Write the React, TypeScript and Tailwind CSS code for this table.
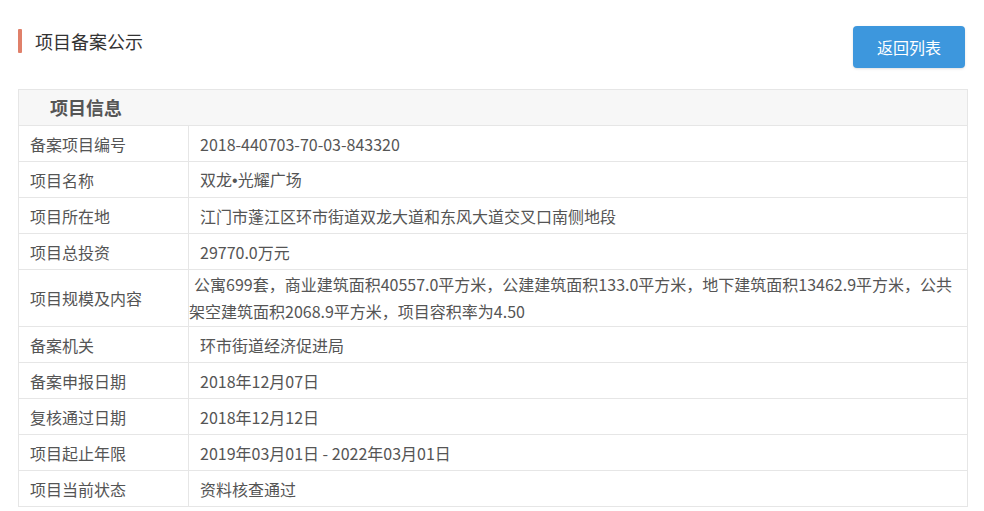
import React from 'react';

const rows: { label: string; value: React.ReactNode; tall?: boolean }[] = [
  { label: '备案项目编号', value: '2018-440703-70-03-843320' },
  {
    label: '项目名称',
    value: (
      <>
        双龙<span style={{ fontFamily: '"Liberation Sans", sans-serif' }}>•</span>光耀广场
      </>
    ),
  },
  { label: '项目所在地', value: '江门市蓬江区环市街道双龙大道和东风大道交叉口南侧地段' },
  { label: '项目总投资', value: '29770.0万元' },
  {
    label: '项目规模及内容',
    value: (
      <>
        <span className="pl-[5px]">公寓699套，商业建筑面积40557.0平方米，公建建筑面积133.0平方米，地下建筑面积13462.9平方米，公共</span>
        <br />
        架空建筑面积2068.9平方米，项目容积率为4.50
      </>
    ),
    tall: true,
  },
  { label: '备案机关', value: '环市街道经济促进局' },
  { label: '备案申报日期', value: '2018年12月07日' },
  { label: '复核通过日期', value: '2018年12月12日' },
  { label: '项目起止年限', value: '2019年03月01日 - 2022年03月01日' },
  { label: '项目当前状态', value: '资料核查通过' },
];

export default function App() {
  return (
    <div
      className="w-[984px] h-[511px] bg-white overflow-hidden"
      style={{ fontFamily: '"Noto Sans CJK SC", "Noto Sans", sans-serif' }}
    >
      <div className="flex items-start justify-between pl-[18px] pr-[19px] pt-[26px]">
        <div className="flex items-center h-[26px] mt-[2px]">
          <div className="w-[4px] h-[24px] bg-[#e0806a] rounded-[1px]" />
          <div className="ml-[13px] text-[18px] text-[#333] leading-none">项目备案公示</div>
        </div>
        <button className="w-[112px] h-[42px] rounded-[4px] bg-[#3d97dd] text-white text-[16px] shadow-sm">
          返回列表
        </button>
      </div>

      <div className="mx-[18px] mt-[21px] w-[950px] border border-[#e6e6e6]">
        <div className="h-[35px] bg-[#f7f7f7] flex items-center pl-[31px] text-[18px] font-bold text-[#555]">
          项目信息
        </div>
        {rows.map((r) => (
          <div
            key={r.label}
            className={`flex border-t border-[#e6e6e6] text-[16px] text-[#555] ${r.tall ? 'h-[57px]' : 'h-[36px]'}`}
          >
            <div className="w-[170px] shrink-0 flex items-center pl-[11px] border-r border-[#e6e6e6]">
              {r.label}
            </div>
            <div
              className={`flex-1 flex items-center ${r.tall ? 'pl-0 leading-[27px]' : 'pl-[11px]'}`}
            >
              <div className="whitespace-nowrap">{r.value}</div>
            </div>
          </div>
        ))}
      </div>
    </div>
  );
}
